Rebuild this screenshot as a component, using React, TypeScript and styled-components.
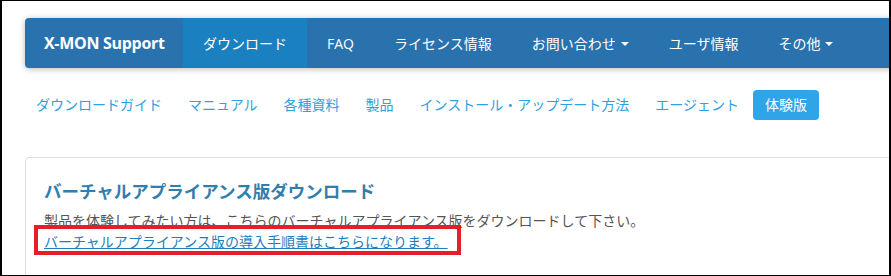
import React from "react";
import styled, { createGlobalStyle } from "styled-components";

const GlobalStyle = createGlobalStyle`
  html, body {
    margin: 0;
    padding: 0;
    background: #fff;
  }
  body {
    font-family: "Open Sans", "Noto Sans CJK JP", sans-serif;
    font-size: 14px;
    color: #555;
  }
`;

const Frame = styled.div`
  position: relative;
  width: 891px;
  height: 276px;
  box-sizing: border-box;
  border-style: solid;
  border-color: #000;
  border-width: 1px 2px 1px 2px;
  overflow: hidden;
  background: #fff;
`;

const Content = styled.div`
  width: 1000px;
  padding-left: 23px;
  padding-top: 17px;
`;

const Navbar = styled.nav`
  display: flex;
  align-items: stretch;
  height: 50px;
  background: #2a72ae;
  border-radius: 4px 0 0 4px;
  box-shadow: 0 1px 6px rgba(0, 0, 0, 0.28);
`;

const Brand = styled.div`
  display: flex;
  align-items: center;
  width: 158px;
  box-sizing: border-box;
  padding-left: 19px;
  color: #fff;
  font-weight: 700;
  font-size: 16px;
  letter-spacing: -0.3px;
`;

const NavItem = styled.div<{ $active?: boolean }>`
  display: flex;
  align-items: center;
  padding: 0 20px;
  color: #fff;
  font-size: 14px;
  background: ${(p) => (p.$active ? "#1a80c0" : "transparent")};
`;

const Caret = styled.span`
  display: inline-block;
  margin-left: 5px;
  margin-top: 1px;
  width: 0;
  height: 0;
  border-left: 4px solid transparent;
  border-right: 4px solid transparent;
  border-top: 4px solid #fff;
`;

const Pills = styled.ul`
  display: flex;
  gap: 2px;
  list-style: none;
  margin: 22px 0 0 -1px;
  padding: 0;
`;

const Pill = styled.li<{ $active?: boolean }>`
  padding: 6px 12px;
  line-height: 18px;
  font-size: 14px;
  border-radius: 4px;
  color: ${(p) => (p.$active ? "#fff" : "#2fa0e0")};
  background: ${(p) => (p.$active ? "#2fa4e7" : "transparent")};
`;

const Panel = styled.section`
  margin-top: 37px;
  border: 1px solid #ddd;
  border-radius: 4px;
  padding: 23px 18px 40px;
`;

const Title = styled.h3`
  margin: 0 0 9px;
  font-size: 17.5px;
  line-height: 20px;
  font-weight: 700;
  color: #317eac;
`;

const Body = styled.p`
  margin: 0;
  line-height: 21px;
  font-size: 14px;
  color: #555;
`;

const GuideLink = styled.a`
  color: #1a80c0;
  text-decoration: underline;
`;

const Highlight = styled.div`
  position: absolute;
  left: 32px;
  top: 224px;
  width: 427px;
  height: 30px;
  box-sizing: border-box;
  border: 4px solid #e51f27;
  pointer-events: none;
`;

const mainNav = [
  { label: "ダウンロード", active: true },
  { label: "FAQ" },
  { label: "ライセンス情報" },
  { label: "お問い合わせ", dropdown: true },
  { label: "ユーザ情報" },
  { label: "その他", dropdown: true },
];

const subNav = [
  { label: "ダウンロードガイド" },
  { label: "マニュアル" },
  { label: "各種資料" },
  { label: "製品" },
  { label: "インストール・アップデート方法" },
  { label: "エージェント" },
  { label: "体験版", active: true },
];

export default function App() {
  return (
    <>
      <GlobalStyle />
      <Frame>
        <Content>
          <Navbar>
            <Brand>X-MON Support</Brand>
            {mainNav.map((item) => (
              <NavItem key={item.label} $active={item.active}>
                {item.label}
                {item.dropdown && <Caret />}
              </NavItem>
            ))}
          </Navbar>
          <Pills>
            {subNav.map((item) => (
              <Pill key={item.label} $active={item.active}>
                {item.label}
              </Pill>
            ))}
          </Pills>
          <Panel>
            <Title>バーチャルアプライアンス版ダウンロード</Title>
            <Body>
              製品を体験してみたい方は、こちらのバーチャルアプライアンス版をダウンロードして下さい。
              <br />
              <GuideLink href="#">バーチャルアプライアンス版の導入手順書はこちらになります。</GuideLink>
            </Body>
          </Panel>
        </Content>
        <Highlight />
      </Frame>
    </>
  );
}
